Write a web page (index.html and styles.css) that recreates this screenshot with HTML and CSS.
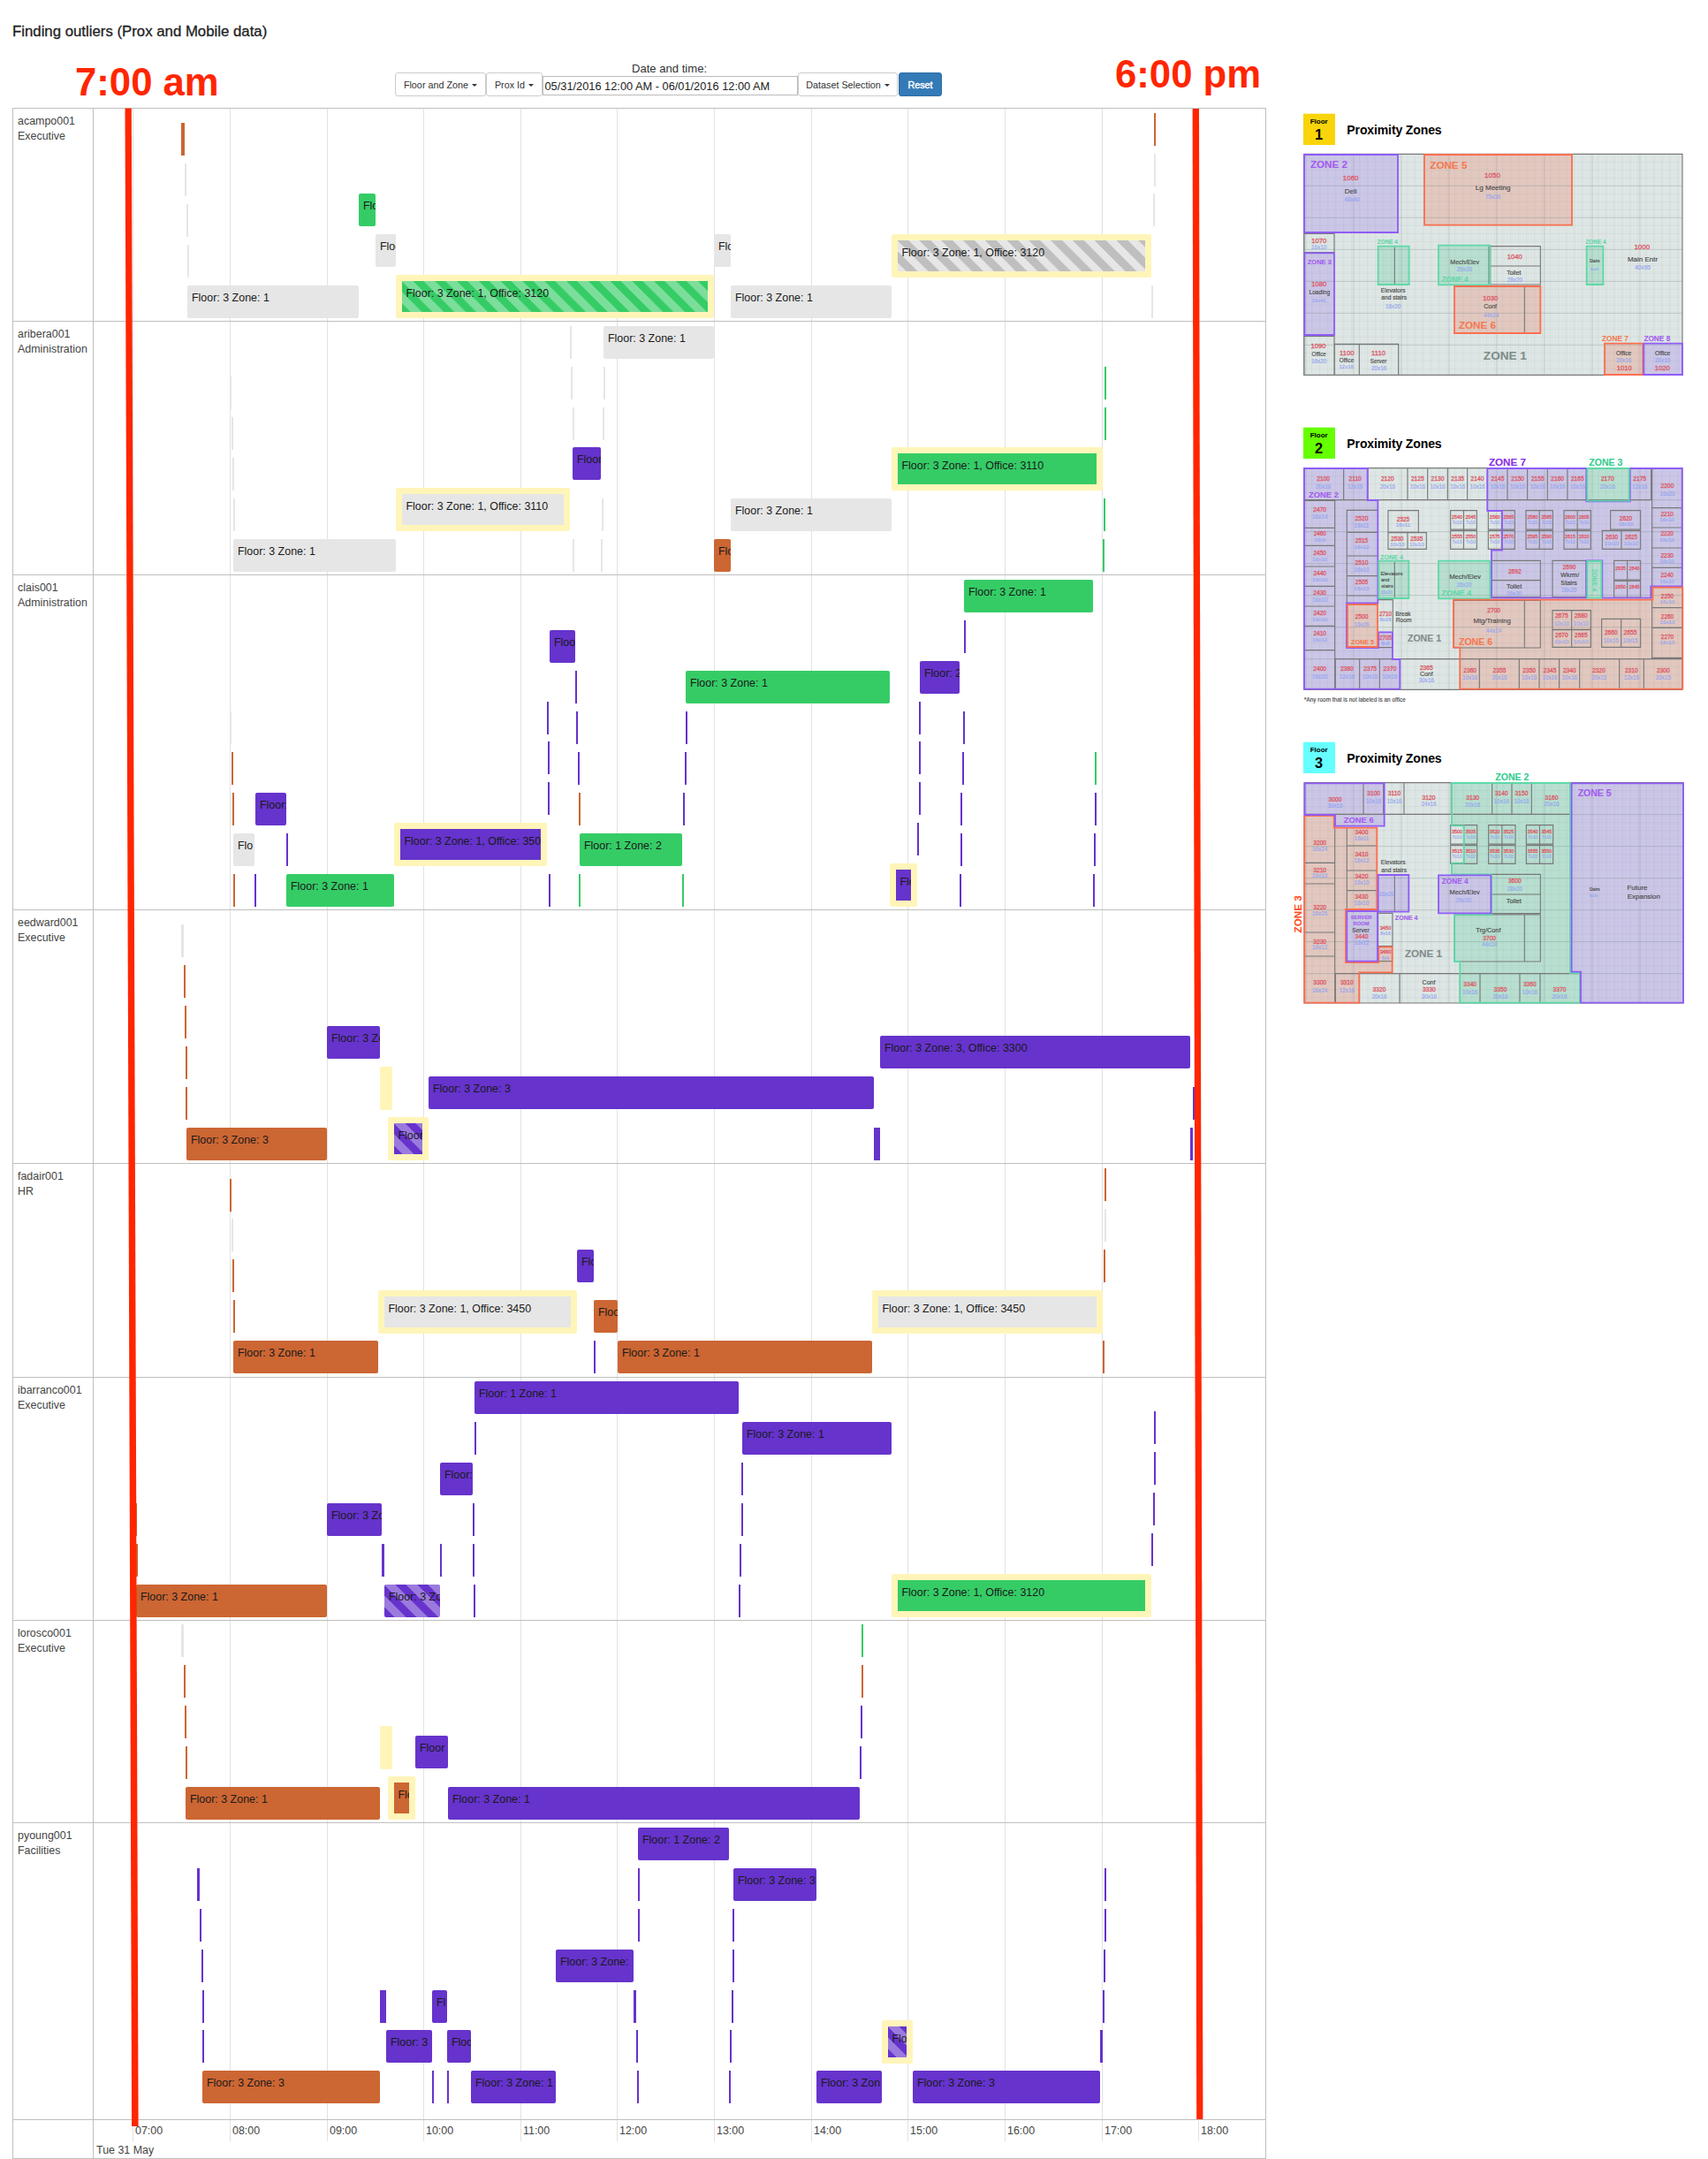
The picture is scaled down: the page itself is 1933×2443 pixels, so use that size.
FILE: index.html
```html
<!DOCTYPE html>
<html lang="en">
<head>
<meta charset="utf-8">
<title>Finding outliers (Prox and Mobile data)</title>
<link rel="stylesheet" href="styles.css">
</head>
<body>
<div class="page">
  <main class="main">
    <header class="header">
      <h1 class="title">Finding outliers (Prox and Mobile data)</h1>
      <div class="controls">
        <button class="btn">Floor and Zone <span class="caret"></span></button>
        <button class="btn btn-prox">Prox Id <span class="caret"></span></button>
        <label class="range"><span class="range-label">Date and time:</span><span class="range-input">05/31/2016 12:00 AM - 06/01/2016 12:00 AM</span></label>
        <button class="btn btn-dataset">Dataset Selection <span class="caret"></span></button>
        <button class="btn btn-primary">Reset</button>
      </div>
    </header>
    <section class="timeline" id="timeline"></section>
  </main>
  <aside class="plans">
    <svg class="plan" id="floor1" viewBox="0 0 1419 990"></svg>
    <svg class="plan plan-two" id="floor2" viewBox="0 0 1419 1020"></svg>
    <svg class="plan plan-three" id="floor3" viewBox="0 0 1419 990"></svg>
  </aside>
  <div class="mark mark-start">7:00 am</div>
  <div class="mark mark-end">6:00 pm</div>
  <svg class="mark-lines" viewBox="0 0 1933 2443">
    <path d="M141.5 122.5h7.3L156.6 2406h-7.5z"/>
    <path d="M1349.6 123h7.4L1361.4 2398h-7.2z"/>
  </svg>
</div>
<script src="app.js"></script>
</body>
</html>
```
FILE: styles.css
```css
* { box-sizing: border-box; }
body {
  margin: 0;
  background: #fff;
  color: #333;
  font-family: "Liberation Sans", Arial, sans-serif;
}
.page { position: relative; display: flex; width: 1933px; height: 2443px; overflow: hidden; }
.main { width: 1419px; margin-left: 14px; flex: none; }
.header { height: 122px; padding-top: 26px; }
.title { margin: 0; font-size: 16.8px; line-height: 20px; font-weight: 400; color: #222; -webkit-text-stroke: .3px #222; }
.controls { display: flex; align-items: flex-end; height: 63px; margin-left: 433px; }
.btn {
  height: 27px; width: 103px; padding: 0; flex: none;
  border: 1px solid #ccc; border-radius: 3px; background: #fff;
  color: #333; font: 10.8px/24px "Liberation Sans", Arial, sans-serif; white-space: nowrap;
}
.btn-prox { width: 64px; }
.btn-dataset { width: 113px; }
.btn-primary { width: 49px; margin-left: 1px; background: #337ab7; border-color: #2e6da4; color: #fff; -webkit-text-stroke: .4px #fff; }
.caret { display: inline-block; margin-left: 1px; vertical-align: middle; border: 3px solid transparent; border-top-color: #333; border-bottom: 0; }
.range { display: flex; flex-direction: column; width: 289px; font-size: 12.8px; padding-bottom: 1px; }
.range-label { position: relative; left: -1px; text-align: center; font-size: 13.1px; line-height: 16px; }
.range-input { height: 22px; padding-left: 1.5px; border: 1px solid #bbb; line-height: 21px; color: #222; white-space: nowrap; }

.timeline { width: 1419px; border: 1px solid #bfbfbf; border-bottom-width: 2px; font-size: 12.45px; color: #444; }
.group { display: flex; border-bottom: 1px solid #bfbfbf; }
.group-label { width: 91px; flex: none; padding: 6px 0 0 5px; border-right: 1px solid #bfbfbf; line-height: 17px; }
.group-label span { display: block; }
.lane, .axis-scale { position: relative; flex: 1; }
.tick { position: absolute; top: 0; bottom: 0; width: 1px; background: #e2e2e2; }
.item {
  position: absolute; height: 37px; padding: 6px 0 0 5px; overflow: hidden;
  border-radius: 2px; color: #1a1a1a; line-height: 17px; white-space: nowrap;
}
.thin { padding: 0; border-radius: 0; }
.purple { background-color: #6633cc; }
.green { background-color: #35cc66; }
.orange { background-color: #cc6633; }
.gray { background-color: #e6e6e6; }
.note { background-color: #fff5b9; height: 49px; border-radius: 2px; }
.high { height: 49px; padding: 6px 0 0 4.5px; border: 7px solid #fff5b9; }
.high .text { display: block; overflow: hidden; }
.stripe {
  background-image: linear-gradient(45deg, rgba(255,255,255,.35) 25%, transparent 25%, transparent 50%, rgba(255,255,255,.35) 50%, rgba(255,255,255,.35) 75%, transparent 75%);
  background-size: 24.8px 24.8px;
}
.gray.stripe { background-image: linear-gradient(45deg, #bfbfbf 25%, transparent 25%, transparent 50%, #bfbfbf 50%, #bfbfbf 75%, transparent 75%); }
.axis { display: flex; height: 43px; }
.axis-label { width: 91px; flex: none; border-right: 1px solid #bfbfbf; }
.axis .tick { bottom: 19px; }
.hour { position: absolute; top: 4px; line-height: 17px; }
.day { position: absolute; left: 3px; top: 26px; line-height: 17px; }

.plans { width: 473px; margin-left: 27px; padding-top: 110px; display: flex; flex-direction: column; }
.plan { width: 473px; height: 330px; flex: none; }
.plan-two { height: 340px; margin-top: 30px; }
.plan-three { margin-top: 10px; }
.plan text { font-family: "Liberation Sans", Arial, sans-serif; text-anchor: middle; }

.mark { position: absolute; color: #ff2600; font-weight: 700; font-size: 43.7px; line-height: 50px; white-space: nowrap; }
.mark-start { left: 85px; top: 68px; }
.mark-end { left: 1262px; top: 59px; }
.mark-lines { position: absolute; left: 0; top: 0; width: 1933px; height: 2443px; fill: #ff2600; pointer-events: none; }
```
FILE: app.js
```js
const X0 = 106;
const TICKS = [150, 260, 370, 479, 589, 698, 808, 918, 1027, 1137, 1247, 1356];
const COLORS = { p: 'purple', g: 'green', o: 'orange', e: 'gray', y: 'note' };
const Z31 = 'Floor: 3 Zone: 1', Z33 = 'Floor: 3 Zone: 3';

// item: left, top, width, kind (colour, h = highlighted, s = striped), text
const GROUPS = [
  { name: 'acampo001', dept: 'Executive', top: 122, end: 363, items: [
    [205,139,4,'o'],[209,185,2,'e'],[211,231,2,'e'],[212,277,2,'e'],[212,323,194,'e',Z31],
    [406,219,19,'g',Z31],[425,265,23,'e',Z31],[448,311,360,'ghs',Z31+', Office: 3120'],
    [808,265,19,'e',Z31],[827,323,182,'e',Z31],[1009,265,294,'ehs',Z31+', Office: 3120'],
    [1306,128,2,'o'],[1306,174,2,'e'],[1305,219,2,'e'],[1303,323,2,'e']]},
  { name: 'aribera001', dept: 'Administration', top: 363, end: 650, items: [
    [260,426,2,'e'],[262,472,2,'e'],[263,518,2,'e'],[264,564,2,'e'],[264,610,184,'e',Z31],
    [448,552,197,'eh',Z31+', Office: 3110'],[645,369,2,'e'],[646,415,2,'e'],[648,461,2,'e'],
    [648,506,32,'p',Z31],[648,610,2,'e'],[680,610,2,'e'],[681,564,2,'e'],[682,461,2,'e'],[683,415,2,'e'],
    [683,369,125,'e',Z31],[808,610,19,'o',Z31],[827,564,182,'e',Z31],[1009,506,239,'gh',Z31+', Office: 3110'],
    [1248,610,2,'g'],[1249,564,2,'g'],[1250,461,2,'g'],[1250,415,2,'g']]},
  { name: 'clais001', dept: 'Administration', top: 650, end: 1029, items: [
    [260,805,2,'e'],[262,851,2,'o'],[263,897,2,'o'],[264,943,24,'e','Flo'],[264,989,2,'o'],[288,989,2,'p'],
    [289,897,35,'p',Z31],[324,943,2,'p'],[324,989,122,'g',Z31],[446,931,173,'ph',Z31+', Office: 3500'],
    [619,794,2,'p'],[620,839,2,'p'],[620,885,2,'p'],[621,989,2,'p'],[622,713,29,'p',Z31],[651,759,2,'p'],
    [652,805,2,'p'],[654,851,2,'p'],[655,897,2,'o'],[656,943,116,'g','Floor: 1 Zone: 2'],[655,989,2,'g'],
    [772,989,2,'g'],[773,897,2,'p'],[775,851,2,'p'],[776,805,2,'p'],[776,759,231,'g',Z31],
    [1007,977,31,'ph',Z31],[1038,931,2,'p'],[1040,885,2,'p'],[1040,839,2,'p'],[1040,794,2,'p'],
    [1041,748,45,'p','Floor: 2 Zone: 1'],[1086,989,2,'p'],[1087,943,2,'p'],[1087,897,2,'p'],[1089,851,2,'p'],
    [1090,805,2,'p'],[1091,656,146,'g',Z31],[1091,702,2,'p'],[1237,989,2,'p'],[1238,943,2,'p'],[1239,897,2,'p'],[1239,851,2,'g']]},
  { name: 'eedward001', dept: 'Executive', top: 1029, end: 1316, items: [
    [205,1046,3,'e'],[208,1092,2,'o'],[209,1138,2,'o'],[210,1184,2,'o'],[210,1230,2,'o'],[211,1276,159,'o',Z33],
    [370,1161,60,'p',Z33],[430,1207,14,'y'],[439,1264,46,'phs',Z33],[485,1218,504,'p',Z33],[989,1276,7,'p'],
    [996,1172,351,'p',Z33+', Office: 3300'],[1347,1276,3,'p'],[1350,1230,3,'p']]},
  { name: 'fadair001', dept: 'HR', top: 1316, end: 1558, items: [
    [260,1334,2,'o'],[262,1379,2,'e'],[263,1425,2,'o'],[264,1471,2,'o'],[264,1517,164,'o',Z31],
    [428,1460,225,'eh',Z31+', Office: 3450'],[653,1414,19,'p',Z31],[672,1471,27,'o',Z31],[672,1517,2,'p'],
    [699,1517,288,'o',Z31],[987,1460,261,'eh',Z31+', Office: 3450'],[1248,1517,2,'o'],[1249,1414,2,'o'],
    [1250,1368,2,'e'],[1250,1322,2,'o']]},
  { name: 'ibarranco001', dept: 'Executive', top: 1558, end: 1833, items: [
    [153,1701,2,'o'],[154,1747,2,'o'],[154,1793,216,'o',Z31],[370,1701,62,'p',Z31],[432,1747,3,'p'],
    [435,1793,63,'ps',Z31],[498,1747,2,'p'],[498,1655,37,'p',Z31],[535,1701,2,'p'],[535,1747,2,'p'],[536,1793,2,'p'],
    [537,1609,2,'p'],[537,1563,299,'p','Floor: 1 Zone: 1'],[836,1793,2,'p'],[837,1747,2,'p'],[839,1701,2,'p'],[839,1655,2,'p'],
    [840,1609,169,'p',Z31],[1009,1781,294,'gh',Z31+', Office: 3120'],[1303,1735,2,'p'],[1305,1689,2,'p'],[1306,1643,2,'p'],[1306,1597,2,'p']]},
  { name: 'lorosco001', dept: 'Executive', top: 1833, end: 2062, items: [
    [205,1838,3,'e'],[208,1884,2,'o'],[209,1930,2,'o'],[210,1976,2,'o'],[210,2022,220,'o',Z31],[430,1953,14,'y'],
    [439,2010,31,'oh',Z31],[470,1964,37,'p','Floor'],[507,2022,466,'p',Z31],[973,1976,2,'p'],[974,1930,2,'p'],[975,1884,2,'o'],[975,1838,2,'g']]},
  { name: 'pyoung001', dept: 'Facilities', top: 2062, end: 2398, items: [
    [223,2114,3,'p'],[226,2160,2,'p'],[228,2206,2,'p'],[229,2252,2,'p'],[229,2297,2,'p'],[229,2343,201,'o',Z33],
    [430,2252,7,'p'],[437,2297,52,'p','Floor: 3'],[489,2343,2,'p'],[489,2252,17,'p','Fl'],[506,2297,27,'p',Z31],[506,2343,2,'p'],
    [533,2343,96,'p',Z31],[629,2206,88,'p','Floor: 3 Zone:'],[717,2252,3,'p'],[720,2297,2,'p'],[721,2343,2,'p'],[722,2160,2,'p'],[722,2114,2,'p'],
    [722,2068,103,'p','Floor: 1 Zone: 2'],[825,2343,2,'p'],[826,2297,2,'p'],[828,2252,2,'p'],[829,2206,2,'p'],[829,2160,2,'p'],
    [830,2114,94,'p',Z33],[924,2343,74,'p','Floor: 3 Zon'],[998,2286,35,'phs',Z33],[1033,2343,212,'p',Z33],
    [1245,2297,3,'p'],[1248,2252,2,'p'],[1249,2206,2,'p'],[1250,2160,2,'p'],[1250,2114,2,'p']]}
];

const ticks = TICKS.map(x => `<i class="tick" style="left:${x - X0}px"></i>`).join('');
document.getElementById('timeline').innerHTML = GROUPS.map(g => {
  const start = g.top + 1;
  const items = g.items.map(([x, y, w, k, t]) => {
    const cls = ['item', COLORS[k[0]]];
    if (k.includes('h')) cls.push('high');
    if (k.includes('s')) cls.push('stripe');
    if (!t) cls.push('thin');
    return `<div class="${cls.join(' ')}" style="left:${x - X0}px;top:${y - start}px;width:${w}px">${t ? `<span class="text">${t}</span>` : ''}</div>`;
  }).join('');
  return `<div class="group" style="height:${g.end - g.top}px"><div class="group-label"><span>${g.name}</span><span>${g.dept}</span></div><div class="lane">${ticks}${items}</div></div>`;
}).join('') + `<div class="axis"><div class="axis-label"></div><div class="axis-scale">${ticks}${
  TICKS.map((x, i) => `<span class="hour" style="left:${x - X0 + 3}px">${String(7 + i).padStart(2, '0')}:00</span>`).join('')
}<span class="day">Tue 31 May</span></div></div>`;

// ---- floor plans ----
const FILL = { p: '#b79af0', r: '#f2a08c', g: '#86dcb8' };
const LINE = { p: '#8f5cf7', r: '#fb6f50', g: '#5fd8a8' };
const INK = { p: '#a35cf0', P: '#8a2be8', r: '#f47a50', R: '#ff4d1c', g: '#5fd8a8', G: '#33cc90', k: '#484848', n: '#dc5a68', d: '#94a4f0', z: '#7f8c8a', b: '#000' };

function text(x, y, size, str, ink, weight, extra) {
  const stroke = ink === 'b' ? 0 : weight ? .3 : ink === 'n' ? .9 : .4;
  return `<text x="${x}" y="${y + size * .36}" font-size="${size}" fill="${INK[ink]}" stroke="${INK[ink]}" stroke-width="${stroke}" font-weight="${weight || 400}" ${extra || ''}>${str}</text>`;
}
function box(x, y, x2, y2) { return `M${x} ${y}H${x2}V${y2}H${x}Z`; }
// vertical / horizontal wall segments sharing the same extent
const cols = (y, y2, xs) => xs.map(v => `M${v} ${y}V${y2}`).join('');
const rows = (x, x2, ys) => ys.map(v => `M${x} ${v}H${x2}`).join('');

function plan(id, o) {
  const [x, y, x2, y2] = o.frame;
  let grid = '', mid = '', major = '';
  for (let gx = x + 5.4; gx < x2; gx += 5.4) grid += `M${gx.toFixed(1)} ${y}V${y2}`;
  for (let gy = y + 5.4; gy < y2; gy += 5.4) grid += `M${x} ${gy.toFixed(1)}H${x2}`;
  for (let gx = x + 27; gx < x2; gx += 27) mid += `M${gx} ${y}V${y2}`;
  for (let gy = y + 27; gy < y2; gy += 27) mid += `M${x} ${gy}H${x2}`;
  for (let gx = 540; gx < x2; gx += 162) major += `M${gx} ${y}V${y2}`;
  for (let gx = 378; gx > x; gx -= 162) major += `M${gx} ${y}V${y2}`;
  for (let gy = y + 108; gy < y2; gy += 108) major += `M${x} ${gy}H${x2}`;
  const zones = o.zones.map(([c, d]) => `<path d="${d}" fill="${FILL[c]}" fill-opacity=".42"/>`).join('');
  const edges = o.zones.map(([c, d]) => `<path d="${d}" fill="none" stroke="${LINE[c]}" stroke-width="5.5"/>`).join('');
  const rooms = (o.rooms || []).map(([cx, cy, n, dim, s]) => {
    const z = s || 20;
    return text(cx, cy, z, n, 'n') + (dim ? text(cx, cy + (s ? 20 : 26), z - 1, dim, 'd') : '');
  }).join('');
  const labels = o.labels.map(([lx, ly, size, str, ink, weight, extra]) =>
    text(lx, ly, weight ? size * 1.13 : size, str, ink, weight, extra)).join('');
  document.getElementById(id).innerHTML =
    `<rect x="45" y="${o.badge}" width="108" height="106" fill="${o.color}"/>` +
    text(98, o.badge + 26, 24, 'Floor', 'b', 700) + text(98, o.badge + 70, 49, o.floor, 'b', 700) +
    text(354, o.badge + 56, 42, 'Proximity Zones', 'b', 700, 'textLength="322"') +
    `<rect x="${x}" y="${y}" width="${x2 - x}" height="${y2 - y}" fill="#e6edeb"/>` + zones +
    `<path d="${grid}" stroke="#8fa5a5" stroke-opacity=".16" stroke-width="1.5"/>` +
    `<path d="${mid}" stroke="#8fa5a5" stroke-opacity=".16" stroke-width="2"/>` +
    `<path d="${major}" stroke="#5f7575" stroke-opacity=".32" stroke-width="2"/>` +
    `<path d="${box(x, y, x2, y2)}${o.walls}" fill="none" stroke="#787878" stroke-width="3.4"/>` + edges + rooms + labels;
}

plan('floor1', {
  frame: [47, 193, 1332, 943], badge: 56, color: '#f9d40b', floor: '1',
  zones: [['p', box(48, 195, 366, 459)], ['r', box(456, 195, 957, 434)], ['p', box(49, 529, 150, 807)],
    ['g', box(299, 506, 404, 636)], ['g', box(504, 503, 679, 637)], ['g', box(1007, 506, 1063, 636)],
    ['r', box(558, 642, 850, 801)], ['r', box(1068, 836, 1198, 942)], ['p', box(1201, 836, 1332, 942)]],
  walls: box(48, 463, 150, 527) + box(48, 811, 150, 943) + 'M150 838H368V943M235 838V943M151 838V943M355 508V634' +
    box(680, 506, 850, 636) + 'M680 573H850M796 644V799M675 505V635',
  labels: [[132,228,31,'ZONE 2','p',700],[538,229,31,'ZONE 5','r',700],[100,560,20,'ZONE 3','p',700],[331,491,17,'ZONE 4','g',700],
    [560,618,22,'ZONE 4','g',700],[1038,491,17,'ZONE 4','g',700],[636,774,31,'ZONE 6','r',700],[730,876,36,'ZONE 1','z',700],
    [1104,819,22,'ZONE 7','r',700],[1246,819,22,'ZONE 8','p',700],
    [206,273,24,'1060','n'],[206,317,24,'Deli','k'],[210,347,19,'48x40','d'],
    [687,264,24,'1050','n'],[689,305,24,'Lg Meeting','k'],[689,338,19,'75x36','d'],
    [98,486,23,'1070','n'],[98,510,19,'16x10','d'],[98,633,23,'1080','n'],[100,661,20,'Loading','k'],[98,691,18,'16x41','d'],
    [96,844,23,'1090','n'],[98,871,19,'Office','k'],[98,895,19,'16x20','d'],
    [193,867,23,'1100','n'],[192,892,19,'Office','k'],[191,916,18,'12x16','d'],
    [300,867,23,'1110','n'],[300,895,19,'Server','k'],[302,919,19,'20x16','d'],
    [593,560,21,'Mech/Elev','k'],[592,584,19,'26x20','d'],[763,541,23,'1040','n'],[760,594,21,'Toilet','k'],[763,620,19,'28x20','d'],
    [350,656,20,'Elevators','k'],[353,680,20,'and stairs','k'],[350,710,19,'16x20','d'],
    [680,682,23,'1030','n'],[680,710,21,'Conf','k'],[683,739,19,'44x24','d'],
    [1034,556,14,'Stairs','k'],[1034,582,13,'9x20','d'],[1195,506,24,'1000','n'],[1197,549,24,'Main Entr','k'],[1197,578,20,'40x95','d'],
    [1133,869,20,'Office','k'],[1133,894,19,'20x16','d'],[1135,920,23,'1010','n'],
    [1265,869,20,'Office','k'],[1265,894,19,'20x16','d'],[1264,920,23,'1020','n']]
});

plan('floor2', {
  frame: [47, 179, 1332, 931], badge: 41, color: '#66ff00', floor: '2',
  zones: [['p', 'M48 180H263V288H298V637H192V789H300V736H348V828H373V929H48Z'],
    ['p', 'M670 180H1006V292H1154V180H1331V580H1225V620H1060V493H1006V620H684V458H720V324H670Z'],
    ['g', box(1009, 180, 1151, 290)], ['g', box(301, 494, 403, 621)], ['g', box(504, 494, 679, 622)], ['g', box(1009, 495, 1057, 620)],
    ['r', box(195, 642, 297, 786)],
    ['r', 'M555 626H1231V584H1333V929H577V788H555Z']],
  walls: rows(48, 1226, [287]) + cols(180, 287, [182,264,399,467,535,602,670,738,806,874,942,1006,1154,1226]) +
    cols(287, 930, [152]) + rows(48, 152, [289,382,442,513,580,648,715,797]) +
    'M193 637V322H297M193 397H297M193 477H297M193 545H297M193 612H297' +
    box(333, 323, 436, 397) + box(333, 398, 463, 454) + 'M399 398V454' +
    [[545,634],[673,763],[801,892],[930,1021]].map(([a, b]) => box(a, 323, b, 387) + box(a, 391, b, 454) + `M${(a + b) / 2} 323V454`).join('') +
    box(1088, 323, 1190, 387) + box(1060, 391, 1190, 454) + 'M1125 391V454' +
    box(684, 493, 850, 617) + 'M684 560H850' + box(891, 493, 1005, 617) +
    box(1100, 493, 1190, 558) + box(1100, 562, 1190, 618) + 'M1145 493V618' +
    'M1229 180V826' + rows(1229, 1332, [314,381,450,517,584,653,721,823]) +
    'M355 497V618M299 626H349V788H299' + box(555, 628, 850, 789) + 'M796 628V789' +
    box(891, 662, 1021, 727) + box(891, 728, 1021, 787) + 'M956 662V787' + box(1058, 691, 1190, 787) + 'M1124 691V787' +
    'M48 797H152M152 827H1332' + cols(827, 930, [154,236,304,577,643,778,846,914,983,1118,1201]),
  rooms: [[113,216,'2100','20x16'],[221,216,'2110','12x16'],[331,216,'2120','20x16'],[433,216,'2125','10x16'],[501,216,'2130','10x16'],
    [569,216,'2135','10x16'],[636,216,'2140','10x16'],[705,216,'2145','10x16'],[773,216,'2150','10x16'],[841,216,'2155','10x16'],
    [908,216,'2160','10x16'],[976,216,'2165','10x16'],[1078,216,'2170','20x16'],[1187,216,'2175','12x16'],[1281,240,'2200','16x20'],
    [101,319,'2470','16x14'],[101,402,'2460','16x9',19],[101,467,'2450','16x10',19.5],[101,537,'2440','16x10',19.5],[101,601,'2430','16x10'],
    [101,672,'2420','16x10',19.5],[101,741,'2410','16x12',19.5],[101,860,'2400','16x20'],
    [243,349,'2520','16x11'],[243,425,'2515','16x12',19.5],[243,499,'2510','16x10'],[243,567,'2505','16x10',19.5],[243,684,'2500','16x26'],
    [384,352,'2525','16x11',19.5],[364,418,'2530','10x10',19],[430,418,'2535','10x10',19],
    [1280,334,'2210','16x10',19.5],[1280,402,'2220','16x10',19.5],[1280,475,'2230','16x10',19.5],[1280,543,'2240','16x10',19.5],
    [1281,613,'2250','16x10',19.5],[1281,682,'2260','16x10',19.5],[1281,751,'2270','16x15',19.5],
    [567,345,'2540','7x10',16],[613,345,'2545','7x10',16],[695,345,'2560','7x10',16],[742,345,'2565','7x10',16],
    [823,345,'2580','7x10',16],[871,345,'2585','7x10',16],[951,345,'2600','7x10',16],[998,345,'2605','7x10',16],
    [567,411,'2555','7x10',16],[613,411,'2550','7x10',16],[695,411,'2575','7x10',16],[742,411,'2570','7x10',16],
    [823,411,'2595','7x10',16],[871,411,'2590','7x10',16],[951,411,'2615','7x10',16],[998,411,'2610','7x10',16],
    [1140,349,'2620','16x10',19.5],[1092,414,'2630','10x10',19],[1158,414,'2625','10x10',19],
    [763,529,'2692',''],[948,516,'2690',''],[1122,519,'2635','',16],[1169,519,'2640','',16],[1122,583,'2650','',16],[1169,583,'2645','',16],
    [324,673,'2710','8x16',19],[324,755,'2705','8x8',19],[692,663,'2700',''],
    [922,681,'2675','10x10'],[988,681,'2680','10x10'],[922,747,'2670','10x10',19.5],[988,747,'2665','10x10',19.5],
    [1090,737,'2660','10x15'],[1155,737,'2655','10x15'],
    [193,860,'2380','12x16'],[272,860,'2375','10x16'],[339,860,'2370','10x16'],[463,856,'2365',''],
    [611,865,'2360','10x16'],[711,865,'2355','20x16'],[812,865,'2350','10x16'],[882,865,'2345','10x16'],[949,865,'2340','10x16'],
    [1048,865,'2320','20x15'],[1159,865,'2310','12x16'],[1267,865,'2300','20x15']],
  labels: [[738,158,31,'ZONE 7','P',700],[1072,160,28,'ZONE 3','G',700],[114,269,25,'ZONE 2','p',700],[345,480,19,'ZONE 4','g',700],
    [565,603,25,'ZONE 4','g',700],[1033,559,19,'ZONE 4','g',700,'transform="rotate(90 1033 559)"'],[246,768,19,'ZONE 5','r',700],[630,768,28,'ZONE 6','r',700],
    [456,758,28,'ZONE 1','z',700],[594,546,23,'Mech/Elev','k'],[591,575,19,'26x20','d'],[761,580,22,'Toilet','k'],[761,604,19,'26x20','d'],
    [950,542,22,'Wkrm/','k'],[947,567,22,'Stairs','k'],[947,593,19,'26x20','d'],[345,537,18,'Elevators','k'],[323,558,17,'and','k'],[330,579,17,'stairs','k'],[327,600,15,'16x20','d'],
    [384,673,20,'Break','k'],[386,695,20,'Room','k'],[686,697,23,'Mtg/Training','k'],[692,730,19,'44x24','d'],[463,876,21,'Conf','k'],[463,898,19,'30x16','d'],
    [220,964,19,'*Any room that is not labeled is an office','k',0,'textLength="344"']]
});

plan('floor3', {
  frame: [48, 197, 1335, 945], badge: 59, color: '#66ffff', floor: '3',
  zones: [['g', 'M549 198H951V843H984V944H577V804H558V646H684V508H549V470H590V343H549Z'],
    ['r', 'M49 309H149V350H295V627H189V807H301V755H347V841H235V944H49Z'],
    ['p', 'M50 199H320V344H153V306H50Z'], ['p', 'M956 199H1335V944H987V839H956Z'],
    ['p', box(193, 633, 297, 803)], ['p', box(299, 510, 403, 635)], ['p', box(504, 511, 682, 640)]],
  walls: 'M48 304H956' + cols(198, 304, [249,317,387,547,686,753,820]) + cols(304, 945, [152]) +
    rows(48, 152, [469,540,705,786]) + 'M193 350V627' + rows(193, 293, [411,495,563]) +
    [[545,635],[674,765],[802,893]].map(([a, b]) => box(a, 341, b, 405) + box(a, 409, b, 472) + `M${(a + b) / 2} 341V472`).join('') +
    box(684, 508, 850, 641) + 'M684 576H850' + box(299, 640, 348, 752) + 'M300 803H347V755M355 511V634' +
    box(558, 645, 850, 804) + 'M796 645V804M152 845H984' + cols(845, 944, [154,235,372,577,645,780,849]),
  rooms: [[153,254,'3000','30x16',20],[284,233,'3100','10x16'],[354,233,'3110','10x16'],[471,248,'3120','24x16',20],[620,247,'3130','20x16'],
    [718,233,'3140','10x16'],[786,233,'3150','10x16'],[888,248,'3160','20x16',20],
    [101,401,'3200','16x24',20],[101,493,'3210','16x10',20],[101,621,'3220','16x25',20],[101,736,'3230','16x12',20],[101,875,'3300','16x24'],[193,875,'3310','12x16'],
    [243,366,'3400','16x11',20],[243,441,'3410','16x12',20],[243,515,'3420','16x10',20],[243,584,'3430','16x10',20],[243,720,'3440','16x22',20],
    [567,363,'3500','7x10',16],[613,363,'3505','7x10',16],[695,363,'3520','7x10',16],[742,363,'3525','7x10',16],[824,363,'3540','7x10',16],[871,363,'3545','7x10',16],
    [567,428,'3515','7x10',16],[613,428,'3510','7x10',16],[695,428,'3535','7x10',16],[742,428,'3530','7x10',16],[824,428,'3555','7x10',16],[871,428,'3550','7x10',16],
    [763,530,'3600','28x20'],[324,689,'3450','8x16',17],[324,771,'3460','6x6',17],[677,726,'3700','44x24',20],
    [303,898,'3320','20x16'],[472,898,'3330','30x16'],[611,881,'3340','10x16'],[714,898,'3350','20x16'],[814,881,'3360','10x16'],[915,898,'3370','20x16']],
  labels: [[754,177,28,'ZONE 2','G',700],[25,643,31,'ZONE 3','R',700,'transform="rotate(-90 25 643)"'],[1034,232,28,'ZONE 5','p',700],[233,323,25,'ZONE 6','p',700],
    [560,530,22,'ZONE 4','p',700],[395,654,19,'ZONE 4','p',700],[453,776,31,'ZONE 1','z',700],[242,653,15.5,'SERVER','p',700],[242,674,15.5,'ROOM','p',700],
    [240,698,20,'Server','k'],[350,468,20,'Elevators','k'],[353,493,20,'and stairs','k'],[328,576,19,'16x20','d'],[593,568,22,'Mech/Elev','k'],[589,595,19,'26x20','d'],
    [760,598,22,'Toilet','k'],[673,698,22,'Trg/Conf','k'],[471,875,21,'Conf','k'],[1034,560,14,'Stairs','k'],[1030,580,13,'9x20','d'],
    [1179,552,24,'Future','k'],[1201,582,24,'Expansion','k']]
});
```
